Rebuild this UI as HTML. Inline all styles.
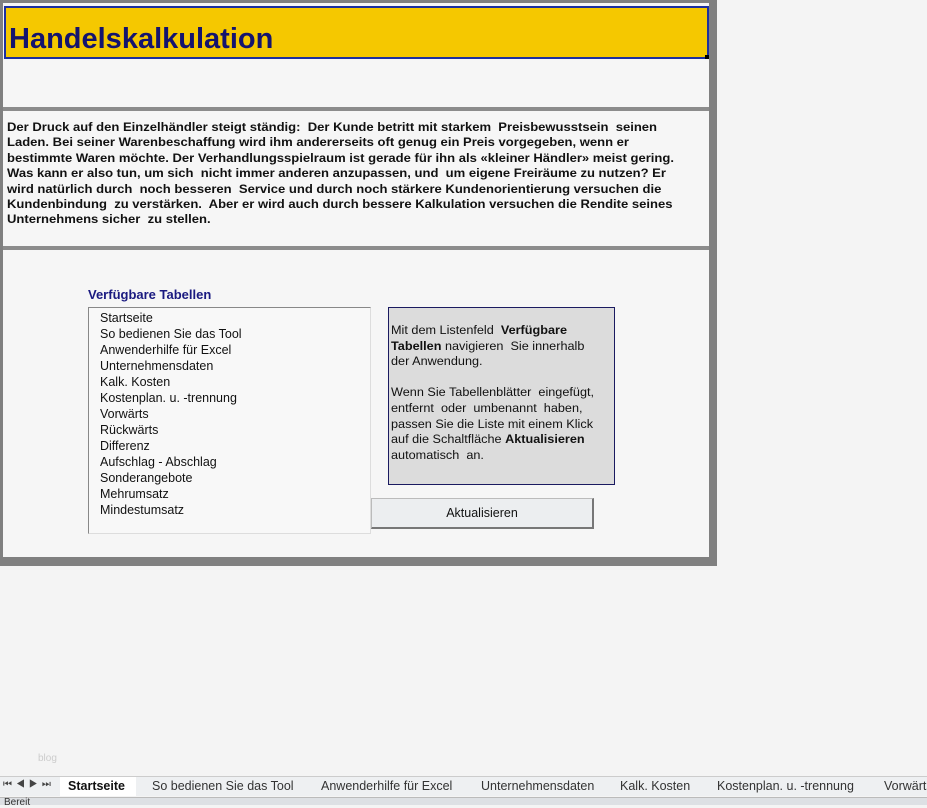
<!DOCTYPE html>
<html><head><style>
*{margin:0;padding:0;box-sizing:border-box}
body{width:927px;height:805px;background:#f4f4f4;position:relative;overflow:hidden;font-family:"Liberation Sans",Arial,sans-serif}
.a{position:absolute}
.n{white-space:nowrap}
</style></head><body>
<div class="a" style="left:0;top:0;width:717px;height:566px;background:#808080"></div>
<div class="a" style="left:3px;top:3px;width:706px;height:554px;background:#f6f6f6"></div>
<div class="a" style="left:4px;top:6px;width:705px;height:53px;background:#f5c800;border:2px solid #1c2fa0"></div>
<div class="a" style="left:705px;top:55px;width:4px;height:4px;background:#000"></div>
<div class="a n" style="left:9px;top:23px;font-size:29px;font-weight:bold;color:#14146e;transform:scaleX(1.0);transform-origin:left">Handelskalkulation</div>
<div class="a" style="left:3px;top:107px;width:706px;height:4px;background:#8c8c8c"></div>
<div class="a" style="left:3px;top:246px;width:706px;height:4px;background:#8c8c8c"></div>
<div class="a n" style="left:7px;top:120px;font-size:12.2px;font-weight:bold;line-height:15.4px;color:#111;transform:scaleX(1.07);transform-origin:left">Der Druck auf den Einzelhändler steigt ständig:&nbsp; Der Kunde betritt mit starkem&nbsp; Preisbewusstsein&nbsp; seinen<br>Laden. Bei seiner Warenbeschaffung wird ihm andererseits oft genug ein Preis vorgegeben, wenn er<br>bestimmte Waren möchte. Der Verhandlungsspielraum ist gerade für ihn als «kleiner Händler» meist gering.<br>Was kann er also tun, um sich&nbsp; nicht immer anderen anzupassen, und&nbsp; um eigene Freiräume zu nutzen? Er<br>wird natürlich durch&nbsp; noch besseren&nbsp; Service und durch noch stärkere Kundenorientierung versuchen die<br>Kundenbindung&nbsp; zu verstärken.&nbsp; Aber er wird auch durch bessere Kalkulation versuchen die Rendite seines<br>Unternehmens sicher&nbsp; zu stellen.</div>
<div class="a" style="left:88px;top:287px;font-size:13px;font-weight:bold;color:#1a1a80">Verfügbare Tabellen</div>
<div class="a" style="left:371px;top:498px;width:223px;height:31px;background:#eceef0;border:1px solid #bbb;border-right:2px solid #777;border-bottom:2px solid #777;font-size:12.5px;color:#111;text-align:center;line-height:28px">Aktualisieren</div>
<div class="a" style="left:88px;top:307px;width:283px;height:227px;background:#f8f8f8;border:1px solid #888;border-right-color:#ddd;border-bottom-color:#ddd;padding:2px 0 0 11px;font-size:12.5px;line-height:16px;color:#111">Startseite<br>So bedienen Sie das Tool<br>Anwenderhilfe für Excel<br>Unternehmensdaten<br>Kalk. Kosten<br>Kostenplan. u. -trennung<br>Vorwärts<br>Rückwärts<br>Differenz<br>Aufschlag - Abschlag<br>Sonderangebote<br>Mehrumsatz<br>Mindestumsatz</div>
<div class="a" style="left:388px;top:307px;width:227px;height:178px;background:#dcdcdc;border:1px solid #1a1a60"></div>
<div class="a n" style="left:391px;top:323px;font-size:12.3px;line-height:15.6px;color:#111;transform:scaleX(1.03);transform-origin:left">Mit dem Listenfeld&nbsp; <b>Verfügbare</b><br><b>Tabellen</b> navigieren&nbsp; Sie innerhalb<br>der Anwendung.<br><br>Wenn Sie Tabellenblätter&nbsp; eingefügt,<br>entfernt&nbsp; oder&nbsp; umbenannt&nbsp; haben,<br>passen Sie die Liste mit einem Klick<br>auf die Schaltfläche <b>Aktualisieren</b><br>automatisch&nbsp; an.</div>
<div class="a" style="left:38px;top:753px;font-size:10px;color:#ccc">blog</div>
<div class="a" style="left:0;top:776px;width:927px;height:20px;background:#eef0f2;border-top:1px solid #ccc"></div>
<div class="a" style="left:3px;top:779px;font-size:10px;color:#444;letter-spacing:4px">⏮◀▶⏭</div>
<div class="a" style="left:60px;top:777px;width:76px;height:19px;background:#fff"></div>
<div class="a" style="left:0;top:779px;white-space:nowrap;font-size:12.5px;color:#333">
<span class="a" style="left:68px;font-weight:bold;color:#111">Startseite</span>
<span class="a" style="left:152px">So bedienen Sie das Tool</span>
<span class="a" style="left:321px">Anwenderhilfe für Excel</span>
<span class="a" style="left:481px">Unternehmensdaten</span>
<span class="a" style="left:620px">Kalk. Kosten</span>
<span class="a" style="left:717px">Kostenplan. u. -trennung</span>
<span class="a" style="left:884px">Vorwärts</span>
</div>
<div class="a" style="left:0;top:797px;width:927px;height:8px;background:#dde0e4;border-top:1px solid #bbb"></div>
<div class="a" style="left:4px;top:798px;font-size:10px;color:#333;line-height:10px">Bereit</div>
</body></html>
